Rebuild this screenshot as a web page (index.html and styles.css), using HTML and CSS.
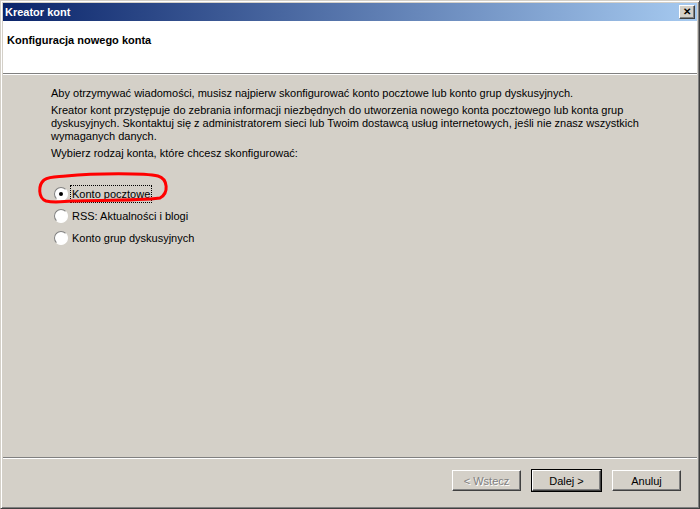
FILE: index.html
```html
<!DOCTYPE html>
<html lang="pl">
<head>
<meta charset="UTF-8">
<title>Kreator kont</title>
<link rel="stylesheet" href="styles.css">
</head>
<body>
<div class="window">
  <div class="titlebar">
    <span class="title">Kreator kont</span>
    <span class="close-btn">&#x2715;</span>
  </div>
  <div class="header">
    <h1>Konfiguracja nowego konta</h1>
  </div>
  <div class="content">
    <p>Aby otrzymywać wiadomości, musisz najpierw skonfigurować konto pocztowe lub konto grup dyskusyjnych.</p>
    <p>Kreator kont przystępuje do zebrania informacji niezbędnych do utworzenia nowego konta pocztowego lub konta grup dyskusyjnych. Skontaktuj się z administratorem sieci lub Twoim dostawcą usług internetowych, jeśli nie znasz wszystkich wymaganych danych.</p>
    <p>Wybierz rodzaj konta, które chcesz skonfigurować:</p>

    <div class="options">
      <label class="option">
        <span class="radio checked"></span>
        <span class="label focus">Konto <u>p</u>ocztowe</span>
      </label>
      <label class="option">
        <span class="radio"></span>
        <span class="label">RSS: Aktualności i blogi</span>
      </label>
      <label class="option">
        <span class="radio"></span>
        <span class="label">Konto <u>g</u>rup dyskusyjnych</span>
      </label>
      <!-- red marker drawn over the first option -->
      <svg class="marker" width="140" height="34" viewBox="0 0 140 34">
        <path d="M30 5 C60 2 110 2 122 5 C132 8 133 22 124 27 C100 30 60 29 36 30 C22 31 18 32 10 30 C2 27 2 14 8 9 C14 5 22 6 30 5" fill="none" stroke="#f00" stroke-width="3"/>
      </svg>
    </div>
  </div>
  <div class="footer">
    <button class="btn" disabled>&lt; Wstecz</button>
    <button class="btn default">Dalej &gt;</button>
    <button class="btn">Anuluj</button>
  </div>
</div>
</body>
</html>
```
FILE: styles.css
```css
html, body {
margin: 0; padding: 0;
}
body {
font-family: "Liberation Sans", Arial, sans-serif;
font-size: 11px;
color: #000;
background: #d4d0c8;
}
.window {
width: 700px; height: 509px;
box-sizing: border-box;
background: #d4d0c8;
border: 1px solid;
border-color: #d4d0c8 #404040 #404040 #d4d0c8;
box-shadow: inset 1px 1px #ffffff, inset -1px -1px #808080;
padding: 2px;
display: flex;
flex-direction: column;
}
.titlebar {
height: 18px;
background: linear-gradient(to right, #0a246a, #a6caf0);
display: flex;
align-items: center;
justify-content: space-between;
padding: 0 2px 0 2px;
}
.title {
color: #fff; font-weight: bold;
font-size: 11px;
}
.close-btn {
width: 16px; height: 14px;
box-sizing: border-box;
background: #d4d0c8;
border: 1px solid;
border-color: #fff #404040 #404040 #fff;
box-shadow: inset -1px -1px #808080;
font-size: 10px; font-weight: bold;
line-height: 12px;
text-align: center;
}
.header {
background: #fff;
height: 52px;
border-bottom: 1px solid #808080;
box-shadow: 0 1px #fff;
}
.header h1 {
margin: 0;
font-size: 11px; font-weight: bold;
padding: 13px 0 0 4px;
}
.content {
flex: 1;
padding: 13px 40px 0 48px;
}
.content p {
margin: 0 0 4px 0;
line-height: 13px;
}
.options {
position: relative;
margin-top: 23px;
}
.option {
display: flex;
align-items: center;
height: 22px;
}
.radio {
width: 12px; height: 12px;
border-radius: 50%;
background: #fff;
border: 1px solid;
border-color: #808080 #fff #fff #808080;
margin: 0 2px 0 3px;
display: flex;
align-items: center;
justify-content: center;
}
.radio.checked::after {
content: "";
width: 4px; height: 4px;
border-radius: 50%;
background: #000;
}
.label {
padding: 2px 1px;
border: 1px dotted transparent;
}
.label.focus {
border-color: #000;
}
.marker {
position: absolute;
left: -15px; top: -12px;
}
.footer {
height: 49px;
border-top: 1px solid #808080;
box-shadow: inset 0 1px #fff;
display: flex;
justify-content: flex-end;
align-items: flex-start;
gap: 11px;
padding: 12px 16px 0 0;
box-sizing: border-box;
}
.btn {
width: 69px; height: 21px;
font-family: inherit; font-size: 11px;
background: #d4d0c8;
border: 1px solid;
border-color: #fff #404040 #404040 #fff;
box-shadow: inset -1px -1px #808080;
padding: 0;
}
.btn:disabled {
color: #808080;
text-shadow: 1px 1px #fff;
}
.btn.default {
outline: 1px solid #000;
}
```
